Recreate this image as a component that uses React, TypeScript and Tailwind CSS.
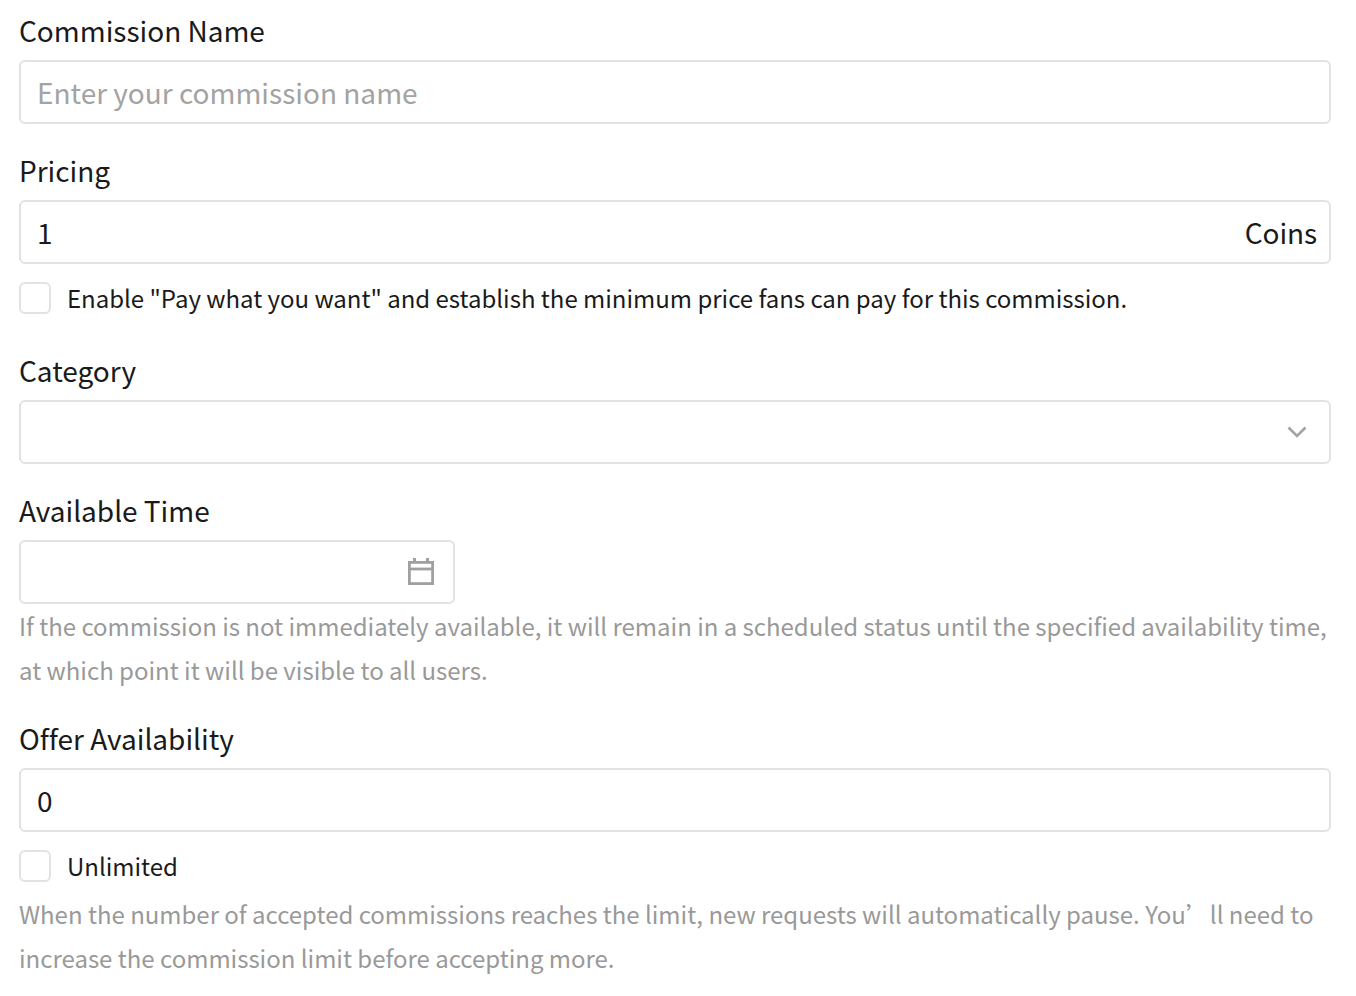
const font = '"Noto Sans CJK SC", "Noto Sans CJK JP", "Noto Sans", sans-serif';

function Label({ children }: { children: string }) {
  return <div className="mb-[6px] h-[44px] text-[28px] leading-[40px] tracking-[-0.015px] text-[#1a1a1a]">{children}</div>;
}

function Check({ children }: { children: string }) {
  return (
    <div className="mt-[12px] flex h-[44px] items-center gap-[16px]">
      <span className="h-[32px] w-[32px] shrink-0 rounded-[6px] border-2 border-[#e2e2e2] bg-white" />
      <span className="text-[24px] leading-[44px] tracking-[-0.015px] text-[#1a1a1a]">{children}</span>
    </div>
  );
}

function Help({ children }: { children: string }) {
  return <p className="text-[24px] leading-[44px] tracking-[-0.012px] text-[#999999]">{children}</p>;
}

const box = "flex h-[64px] items-center rounded-[6px] border-2 border-[#e2e2e2] bg-white";
const inputCls = "h-full min-w-0 flex-1 bg-transparent pl-[16px] text-[28px] text-[#1a1a1a] outline-none placeholder:text-[#a3a3a3]";

export default function App() {
  return (
    <div className="h-[996px] overflow-hidden bg-white pl-[19px] pr-[25px] pt-[10px]" style={{ fontFamily: font }}>
      <section>
        <Label>Commission Name</Label>
        <div className={box}>
          <input className={inputCls} placeholder="Enter your commission name" style={{ fontFamily: font }} />
        </div>
      </section>
      <section className="mt-[26px]">
        <Label>Pricing</Label>
        <div className={box}>
          <input className={inputCls} defaultValue="1" style={{ fontFamily: font }} />
          <span className="pr-[12px] text-[28px] tracking-[-0.1px] text-[#1a1a1a]">Coins</span>
        </div>
        <Check>{'Enable "Pay what you want" and establish the minimum price fans can pay for this commission.'}</Check>
      </section>
      <section className="mt-[30px]">
        <Label>Category</Label>
        <div className={`${box} justify-end pr-[22px]`}>
          <svg width="20" height="12" viewBox="0 0 20 12" fill="none" stroke="#a3a3a3" strokeWidth="2.6">
            <path d="M1.5 1.5l8.5 8.5 8.5-8.5" />
          </svg>
        </div>
      </section>
      <section className="mt-[26px]">
        <Label>Available Time</Label>
        <div className={`${box} w-[436px] justify-end pr-[18px]`}>
          <svg width="28" height="28" viewBox="0 0 28 28" fill="none" stroke="#a0a0a0" strokeWidth="2.8">
            <rect x="2.4" y="4.4" width="23.2" height="21.2" />
            <path d="M2 11h24" />
            <path d="M7.5 0v4M20.5 0v4" strokeWidth="3" />
          </svg>
        </div>
        <Help>If the commission is not immediately available, it will remain in a scheduled status until the specified availability time, at which point it will be visible to all users.</Help>
      </section>
      <section className="mt-[26px]">
        <Label>Offer Availability</Label>
        <div className={box}>
          <input className={inputCls} defaultValue="0" style={{ fontFamily: font }} />
        </div>
        <Check>Unlimited</Check>
        <div className="mt-[4px]">
          <Help>When the number of accepted commissions reaches the limit, new requests will automatically pause. You’ll need to increase the commission limit before accepting more.</Help>
        </div>
      </section>
    </div>
  );
}
